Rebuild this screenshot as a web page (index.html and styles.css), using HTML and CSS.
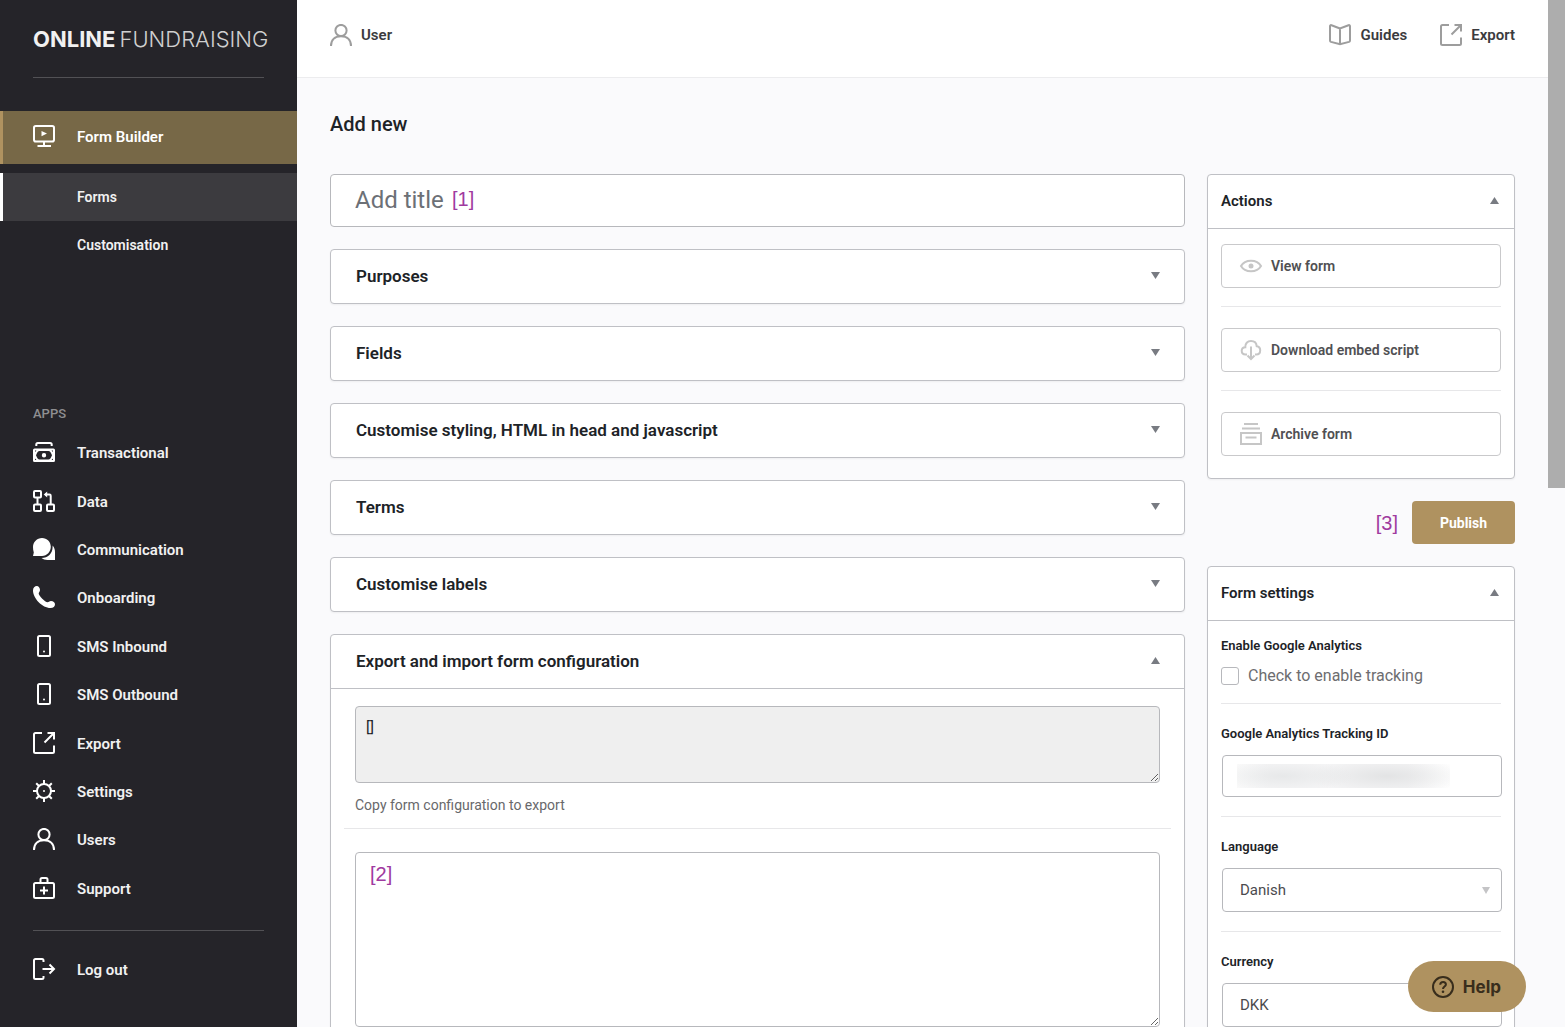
FILE: index.html
```html
<!DOCTYPE html>
<html lang="en">
<head>
<meta charset="utf-8">
<meta name="viewport" content="width=device-width, initial-scale=1">
<title>Add new form – Online Fundraising</title>
<link rel="stylesheet" href="styles.css">
</head>
<body>
<svg class="sprite" aria-hidden="true">
  <symbol id="i-export" viewBox="0 0 22 22"><path d="M9 1H2.5Q1 1 1 2.5V19.500Q1 21 2.500 21H19.500Q21 21 21 19.500V13.500M11.500 10.500L20.500 1.500M14.500 1H21V7.500"/></symbol>
  <symbol id="i-user" viewBox="0 0 22 22"><circle cx="11" cy="6.500" r="5.600"/><path d="M1 22C1 15.800 5 12.200 11 12.200S21 15.800 21 22"/></symbol>
  <symbol id="i-mobile" viewBox="0 0 22 22"><rect x="5" y="1" width="12" height="20" rx="1.500"/><circle class="solid" cx="11" cy="16.500" r="1"/></symbol>
</svg>
<div class="app">
  <aside class="sidebar">
    <a class="logo" href="#"><strong>ONLINE</strong> <span>FUNDRAISING</span></a>
    <nav class="nav-primary" aria-label="Form builder">
      <a class="nav-item nav-item-active" href="#">
        <svg class="icon" viewBox="0 0 22 22"><rect x="1" y="1" width="20" height="15.500" rx="1.800"/><path class="solid" d="M8.500 6L14 8.600L8.500 11.300Z"/><path d="M11 17V21M4.500 21H18"/></svg>
        Form Builder</a>
      <a class="sub-item sub-item-active" href="#">Forms</a>
      <a class="sub-item" href="#">Customisation</a>
    </nav>
    <h2 class="nav-heading">APPS</h2>
    <nav class="nav-apps" aria-label="Apps">
      <a class="nav-item" href="#"><svg class="icon" viewBox="0 0 22 22"><path d="M3.300 5V3.500Q3.300 2 4.800 2H17.200Q18.700 2 18.700 3.500V5"/><path class="solid" fill-rule="evenodd" d="M1.500 7.500H20.500Q22 7.500 22 9V19.500Q22 21 20.500 21H1.500Q0 21 0 19.500V9Q0 7.500 1.500 7.500ZM6.500 10Q4.500 10 3 14.250Q4.500 18.500 6.500 18.500H15.500Q17.500 18.500 19 14.250Q17.500 10 15.500 10ZM11 12A2.200 2.200 0 1 1 11 16.400A2.200 2.200 0 1 1 11 12ZM2 9.500V11L3.500 9.500ZM20 9.500V11L18.500 9.500ZM2 19V17.500L3.500 19ZM20 19V17.500L18.500 19Z"/></svg>Transactional</a>
      <a class="nav-item" href="#"><svg class="icon" viewBox="0 0 22 22"><rect x="1" y="1" width="7" height="6.500" rx="1"/><rect x="1" y="14.500" width="7" height="6.500" rx="1"/><rect x="14" y="14.500" width="7" height="6.500" rx="1"/><path d="M4.500 7.500V14.500M12 4.500H16.500Q17.700 4.500 17.700 5.700V14.500"/><path class="solid" d="M14.200 1.500V7.500L10.700 4.500Z"/></svg>Data</a>
      <a class="nav-item" href="#"><svg class="icon" viewBox="0 0 22 22"><path class="solid" d="M9 0C14 0 17.800 3.800 17.800 8.800S14 18 9 18H0L.8 14.500C.2 12.800 0 11 0 9C0 4 4 0 9 0ZM19.600 7.500C21.400 9.500 22 11.700 22 14V22H14.500C12 22 10 21.300 8.500 20C15 20 19.600 15.500 19.600 9Z"/></svg>Communication</a>
      <a class="nav-item" href="#"><svg class="icon" viewBox="0 0 22 22"><path class="solid" d="M0 4.500C0 1.500 1.800 0 3.800 0C5.500 0 7 1.800 7 4C7 5.700 5.700 6.300 5.700 7.500C5.700 9.500 12.200 16.300 14.500 16.300C15.700 16.300 16.200 15 18 15C20.200 15 22 16.500 22 18.200C22 20.200 20.400 22 17.500 22C9.500 22 0 12.500 0 4.500Z"/></svg>Onboarding</a>
      <a class="nav-item" href="#"><svg class="icon"><use href="#i-mobile"/></svg>SMS Inbound</a>
      <a class="nav-item" href="#"><svg class="icon"><use href="#i-mobile"/></svg>SMS Outbound</a>
      <a class="nav-item" href="#"><svg class="icon"><use href="#i-export"/></svg>Export</a>
      <a class="nav-item" href="#"><svg class="icon" viewBox="0 0 22 22"><circle cx="11" cy="11" r="7"/><circle class="solid" cx="11" cy="11" r="1"/><path d="M11 0V4M11 18V22M0 11H4M18 11H22M3.200 3.200L6 6M16 16L18.800 18.800M3.200 18.800L6 16M16 6L18.800 3.200"/></svg>Settings</a>
      <a class="nav-item" href="#"><svg class="icon"><use href="#i-user"/></svg>Users</a>
      <a class="nav-item" href="#"><svg class="icon" viewBox="0 0 22 22"><rect x="1" y="6" width="20" height="15" rx="1.500"/><path d="M7.500 5.500V2.500Q7.500 1 9 1H13Q14.500 1 14.500 2.500V5.500M11 9.500V17.500M7 13.500H15"/></svg>Support</a>
    </nav>
    <div class="nav-footer">
      <a class="nav-item" href="#"><svg class="icon" viewBox="0 0 22 22"><path d="M10.500 4V2.500Q10.500 1 9 1H2.500Q1 1 1 2.500V19.500Q1 21 2.500 21H9Q10.500 21 10.500 19.500V18M9.500 11H21M16.500 6.500L21 11L16.500 15.500"/></svg>Log out</a>
    </div>
  </aside>

  <main class="main">
    <header class="topbar">
      <a class="top-link" href="#"><svg class="icon"><use href="#i-user"/></svg>User</a>
      <div class="top-links">
        <a class="top-link" href="#"><svg class="icon" viewBox="0 0 22 22"><path d="M11 4.500L2.500 1.200Q1 .8 1 2.200V16.500Q1 17.500 2 17.900L11 20.300L20 17.900Q21 17.500 21 16.500V2.200Q21 .8 19.500 1.200ZM11 4.500V20"/></svg>Guides</a>
        <a class="top-link" href="#"><svg class="icon"><use href="#i-export"/></svg>Export</a>
      </div>
    </header>

    <div class="content">
      <h1 class="page-title">Add new</h1>
      <div class="columns">
        <div class="column">
          <div class="title-field">
            <input class="title-input" type="text" placeholder="Add title" aria-label="Add title">
            <span class="note note-title">[1]</span>
          </div>
          <section class="panel"><h2><button class="panel-head" type="button">Purposes<i class="arrow"></i></button></h2></section>
          <section class="panel"><h2><button class="panel-head" type="button">Fields<i class="arrow"></i></button></h2></section>
          <section class="panel"><h2><button class="panel-head" type="button">Customise styling, HTML in head and javascript<i class="arrow"></i></button></h2></section>
          <section class="panel"><h2><button class="panel-head" type="button">Terms<i class="arrow"></i></button></h2></section>
          <section class="panel"><h2><button class="panel-head" type="button">Customise labels<i class="arrow"></i></button></h2></section>
          <section class="panel">
            <h2><button class="panel-head" type="button" aria-expanded="true">Export and import form configuration<i class="arrow arrow-up"></i></button></h2>
            <div class="panel-body">
              <div class="config-export">
                <textarea id="export" class="config-text" readonly>[]</textarea>
                <label class="hint" for="export">Copy form configuration to export</label>
              </div>
              <div class="config-import">
                <textarea class="config-text config-text-tall" aria-label="Import form configuration"></textarea>
                <span class="note note-import">[2]</span>
              </div>
            </div>
          </section>
        </div>

        <div class="column">
          <section class="panel panel-side">
            <h2><button class="panel-head" type="button" aria-expanded="true">Actions<i class="arrow arrow-up"></i></button></h2>
            <div class="panel-body actions">
              <button class="action" type="button"><svg class="icon" viewBox="0 0 22 22"><path d="M1 11C3 7.500 6.500 5.700 11 5.700S19 7.500 21 11C19 14.500 15.500 16.300 11 16.300S3 14.500 1 11Z"/><circle class="solid" cx="11" cy="11" r="2.500"/></svg>View form</button>
              <hr>
              <button class="action" type="button"><svg class="icon" viewBox="0 0 22 22"><path d="M7 15.500H5.500C3 15.500 1.700 13.800 1.700 11.800C1.700 9.500 3.300 8.300 5.300 8.200C5 4.500 7.500 2 11 2C14.200 2 16.500 4 16.700 7.200C18.800 7.500 20.200 9 20.200 11.300C20.200 13.800 18.500 15.500 16.300 15.500H15M11 7.500V19M7.500 16.500L11 20L14.500 16.500"/></svg>Download embed script</button>
              <hr>
              <button class="action" type="button"><svg class="icon" viewBox="0 0 22 22"><path d="M4 1H18M2 5.500H20M1 10H21V21H1ZM5.500 14.500H16.500"/></svg>Archive form</button>
            </div>
          </section>
          <div class="publish-row">
            <span class="note">[3]</span>
            <button class="publish" type="submit">Publish</button>
          </div>
          <section class="panel panel-side">
            <h2><button class="panel-head" type="button" aria-expanded="true">Form settings<i class="arrow arrow-up"></i></button></h2>
            <div class="panel-body settings">
              <div class="setting setting-check">
                <span class="setting-label">Enable Google Analytics</span>
                <label class="check"><input type="checkbox">Check to enable tracking</label>
              </div>
              <div class="setting">
                <label class="setting-label" for="tracking">Google Analytics Tracking ID</label>
                <div class="field redacted"><input id="tracking" class="control" type="text"></div>
              </div>
              <div class="setting">
                <label class="setting-label" for="language">Language</label>
                <div class="field select"><select id="language" class="control"><option>Danish</option></select></div>
              </div>
              <div class="setting">
                <label class="setting-label" for="currency">Currency</label>
                <div class="field select"><select id="currency" class="control"><option>DKK</option></select></div>
              </div>
            </div>
          </section>
        </div>
      </div>
    </div>
  </main>
  <div class="scroll-track" aria-hidden="true"><div class="scroll-thumb"></div></div>
</div>
<button class="help" type="button"><svg class="icon" viewBox="0 0 22 22"><circle cx="11" cy="11" r="10"/><path d="M8.200 8.700C8.300 7 9.500 6 11.100 6S13.900 7 13.900 8.500C13.900 10.500 11 10.700 11 13"/><circle class="solid" cx="11" cy="15.800" r="1.300"/></svg>Help</button>
</body>
</html>
```
FILE: styles.css
```css
:root {
  --dark: #252429;
  --gold: #af9260;
  --line: #bfc0c5;
  --soft-line: #e7e7e9;
  --page: #fafafc;
  --ink: #1d2327;
}

* { box-sizing: border-box; }

body {
  margin: 0;
  background: var(--page);
  color: var(--ink);
  font-family: Roboto, "Liberation Sans", sans-serif;
  font-size: 15px;
  line-height: 22px;
}

a { color: inherit; text-decoration: none; }
button, input, select, textarea { font: inherit; color: inherit; }
button { cursor: pointer; }
h1, h2 { margin: 0; font: inherit; }

.sprite { position: absolute; width: 0; height: 0; }

.icon {
  flex: none;
  width: 22px;
  height: 22px;
  overflow: visible;
  fill: none;
  stroke: currentColor;
  stroke-width: 2;
}

.solid { fill: currentColor; stroke: none; }

.app {
  display: grid;
  grid-template-columns: 297px minmax(0, 1fr) 17px;
  height: 100vh;
  overflow: hidden;
}

/* Sidebar */
.sidebar {
  background: var(--dark);
  color: #f1f1f1;
  font-weight: 600;
}

.logo {
  display: flex;
  gap: 4px;
  margin: 0 33px;
  height: 78px;
  align-items: center;
  border-bottom: 1px solid #525155;
  font-family: Inter, "Liberation Sans", sans-serif;
  font-size: 22px;
  font-weight: 300;
  color: #d0d0d0;
}

.logo strong { font-weight: 700; color: #f1f1f1; }

.nav-primary { margin-top: 33px; }

.nav-item {
  display: flex;
  align-items: center;
  gap: 22px;
  padding: 0 33px;
}

.nav-item .icon { margin-bottom: 2px; color: #fff; }

.nav-item-active {
  height: 53px;
  margin-bottom: 9px;
  padding-left: 30px;
  padding-bottom: 2px;
  border-left: 3px solid var(--gold);
  background: #776847;
  color: #fff;
}

.sub-item {
  display: flex;
  align-items: center;
  height: 48px;
  padding-left: 74px;
  border-left: 3px solid transparent;
  font-size: 14px;
}

.sub-item-active { border-color: #fff; background: #3c3b3f; }

.nav-heading {
  margin: 134px 33px 4px;
  font-size: 13px;
  font-weight: 500;
  color: #8f8f91;
}

.nav-apps {
  display: grid;
  grid-auto-rows: 1fr;
  height: 484px;
}

.nav-footer { margin-top: 17px; }

.nav-footer::before {
  content: "";
  display: block;
  margin: 0 33px 27px;
  border-top: 1px solid #525155;
}

/* Top bar */
.topbar {
  display: flex;
  justify-content: space-between;
  align-items: center;
  height: 78px;
  padding: 0 33px 8px;
  border-bottom: 1px solid #ececee;
  background: #fff;
}

.top-links { display: flex; gap: 33px; }

.top-link {
  display: flex;
  align-items: center;
  gap: 9px;
  font-weight: 600;
  color: #3b3b3e;
}

.top-link .icon { color: #9d9d9d; }

/* Content */
.content { padding: 33px; }

.page-title {
  margin-bottom: 37px;
  font-size: 20px;
  font-weight: 500;
  line-height: 26px;
}

.columns {
  display: grid;
  grid-template-columns: minmax(0, 1fr) 308px;
  align-items: start;
  gap: 22px;
}

.column {
  display: flex;
  flex-direction: column;
  gap: 22px;
}

.title-field, .config-import, .field { position: relative; }

.title-input {
  display: block;
  width: 100%;
  height: 53px;
  padding: 0 24px 2px;
  border: 1px solid #b7b8bc;
  border-radius: 4px;
  background: #fff;
  font-size: 24px;
}

.title-input::placeholder { color: #6c7076; }

.note {
  font-family: "Liberation Sans", sans-serif;
  font-size: 20px;
  color: #a03a9f;
}

.note-title { position: absolute; top: 14px; left: 122px; }
.note-import { position: absolute; top: 11px; left: 15px; }

.panel {
  border: 1px solid var(--line);
  border-radius: 4px;
  background: #fff;
  box-shadow: 0 1px 2px rgba(0, 0, 0, .05);
}

.panel-head {
  display: flex;
  justify-content: space-between;
  align-items: center;
  width: 100%;
  height: 53px;
  padding: 0 24px 2px 25px;
  border: 0;
  background: none;
  font-size: 17px;
  font-weight: 600;
  text-align: left;
}

.panel-side .panel-head { padding: 0 15px 2px 13px; font-size: 15px; }

.arrow {
  width: 9px;
  height: 7px;
  background: #787b82;
  clip-path: polygon(0 0, 100% 0, 50% 100%);
}

.arrow-up { clip-path: polygon(0 100%, 100% 100%, 50% 0); }

.panel-body { border-top: 1px solid var(--line); }

.config-export {
  margin: 0 13px;
  padding: 17px 11px 12px;
  border-bottom: 1px solid var(--soft-line);
}

.config-import { margin: 23px 24px; }

.config-text {
  display: block;
  width: 100%;
  height: 77px;
  padding: 9px 10px;
  border: 1px solid #b7b8bc;
  border-radius: 4px;
  background: #fff;
  resize: vertical;
}

.config-text:read-only { background: #efefef; }
.config-text-tall { height: 175px; }

.hint {
  display: block;
  margin-top: 11px;
  font-size: 14px;
  color: #68686b;
}

.actions { padding: 15px 13px 22px; }

.actions hr {
  margin: 18px 0 21px;
  border: 0;
  border-top: 1px solid var(--soft-line);
}

.action {
  display: flex;
  align-items: center;
  gap: 9px;
  width: 100%;
  height: 44px;
  padding: 0 18px;
  border: 1px solid #c9c9cb;
  border-radius: 4px;
  background: #fff;
  font-size: 14px;
  font-weight: 600;
  color: #505053;
}

.action .icon { color: #c6c6c6; }

.publish-row {
  display: flex;
  justify-content: flex-end;
  align-items: center;
  gap: 14px;
}

.publish {
  width: 103px;
  height: 43px;
  border: 0;
  border-radius: 4px;
  background: var(--gold);
  font-size: 14px;
  font-weight: 700;
  color: #fff;
}

.settings { padding: 0 13px; }

.setting {
  padding: 19px 0;
  border-bottom: 1px solid var(--soft-line);
}

.setting-check { padding: 14px 0 16px; }

.setting-label {
  display: block;
  margin-bottom: 10px;
  font-size: 13px;
  font-weight: 600;
}

.setting-check .setting-label { margin-bottom: 8px; }

.check {
  display: flex;
  align-items: center;
  gap: 9px;
  font-size: 16px;
  color: #6d6d70;
}

.check input {
  appearance: none;
  width: 18px;
  height: 18px;
  margin: 0;
  border: 1px solid #b7b8bc;
  border-radius: 3px;
  background: #fff;
}

.field { margin: 0 -1px 0 1px; }

.control {
  display: block;
  width: 100%;
  height: 42px;
  padding: 0 17px;
  border: 1px solid #b7b8bc;
  border-radius: 4px;
  background: #fff;
  color: #4b4b4e;
}

select.control { appearance: none; height: 44px; }

.select::after {
  content: "";
  position: absolute;
  top: 19px;
  right: 12px;
  width: 8px;
  height: 7px;
  background: #c4c4c6;
  clip-path: polygon(0 0, 100% 0, 50% 100%);
}

/* Hidden account number */
.redacted::after {
  content: "";
  position: absolute;
  top: 9px;
  left: 15px;
  width: 213px;
  height: 24px;
  background:
    radial-gradient(ellipse 70px 16px at 46px 12px, rgba(225, 227, 228, .7), transparent),
    radial-gradient(ellipse 80px 18px at 150px 12px, rgba(222, 223, 224, .8), transparent),
    linear-gradient(90deg, #fafafa, #f5f5f6 15%, #f5f5f6 80%, #fefefe);
}

.scroll-thumb { height: 488px; background: #adadad; }

.help {
  position: fixed;
  right: 39px;
  bottom: 15px;
  display: flex;
  align-items: center;
  gap: 9px;
  height: 51px;
  padding: 0 25px 0 24px;
  border: 0;
  border-radius: 26px;
  background: var(--gold);
  font-family: Inter, "Liberation Sans", sans-serif;
  font-size: 17px;
  font-weight: 700;
  color: #382d1c;
}
```
